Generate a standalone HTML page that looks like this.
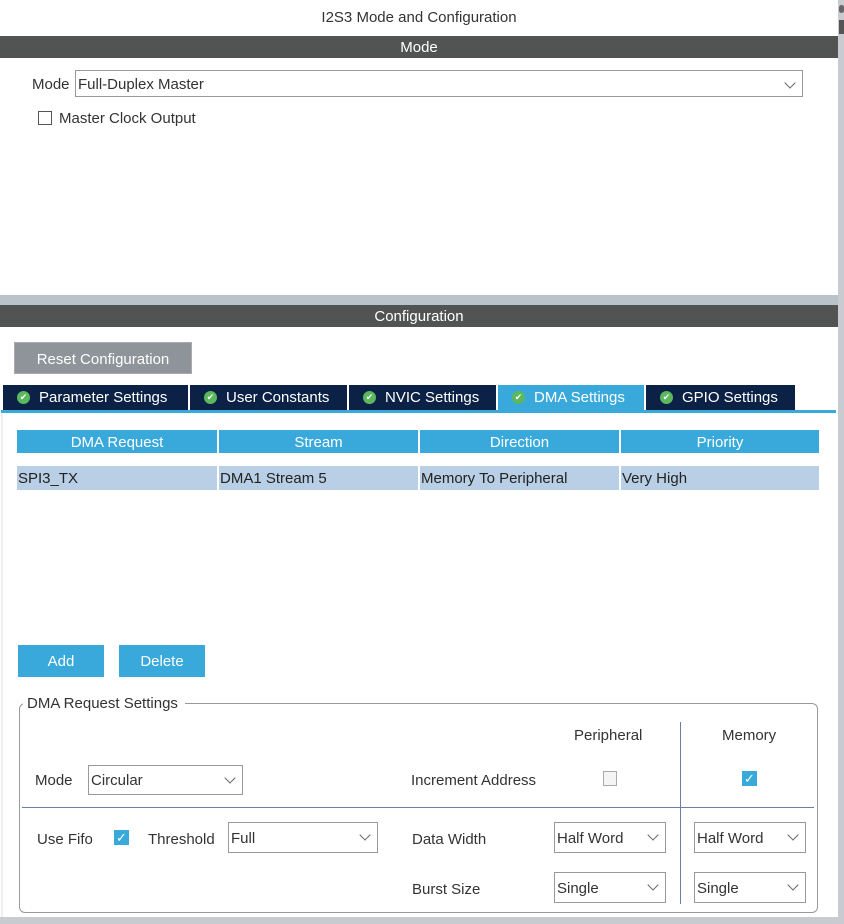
<!DOCTYPE html>
<html><head><style>
*{box-sizing:border-box;margin:0;padding:0}
body{width:844px;height:924px;background:#fff;font-family:"Liberation Sans",sans-serif;font-size:15px;color:#333;position:relative;overflow:hidden}
.a{position:absolute}
.bar{background:#525453;color:#fff;text-align:center;height:22px;line-height:24px;font-size:15px}
.sel{position:absolute;border:1px solid #999;background:#fff;padding-left:2px;line-height:26px}
.sel:after{content:"";position:absolute;right:8px;top:8px;width:7px;height:7px;border-right:1px solid #666;border-bottom:1px solid #666;transform:rotate(45deg)}
.tab{position:absolute;top:385px;height:25px;background:#0b2145;color:#fff;line-height:26px;padding-left:36px}
.tab:before{content:"✔";position:absolute;left:14px;top:6px;width:13px;height:13px;border-radius:50%;background:#5cb85c;color:#fff;font-size:9px;line-height:13px;text-align:center}
.th{position:absolute;top:430px;height:23px;background:#39a9dc;color:#fff;text-align:center;line-height:25px}
.td{position:absolute;top:466px;height:24px;background:#b8cfe6;line-height:26px;padding-left:1px;color:#222}
.btn{position:absolute;background:#39a9dc;color:#fff;text-align:center;line-height:34px;height:32px}
.cb{position:absolute;width:15px;height:15px;background:#39a9dc;color:#fff;font-size:13px;line-height:15px;text-align:center}
.t{position:absolute;top:0}
</style></head><body>
<div class="a" style="left:838px;top:0;width:6px;height:924px;background:#c8ccd1"></div>
<div class="a" style="left:839px;top:5px;width:5px;height:8px;background:#666;border-radius:3px"></div>
<div class="a" style="left:839px;top:20px;width:5px;height:14px;background:#555"></div>
<div class="a" style="left:0;top:9px;width:838px;text-align:center;font-size:15px">I2S3 Mode and Configuration</div>
<div class="a bar" style="left:0;top:36px;width:838px">Mode</div>
<div class="a" style="left:32px;top:76px">Mode</div>
<div class="sel" style="left:75px;top:70px;width:728px;height:27px;line-height:27px">Full-Duplex Master</div>
<div class="a" style="left:38px;top:111px;width:14px;height:14px;border:1px solid #555"></div>
<div class="a" style="left:59px;top:110px">Master Clock Output</div>
<div class="a" style="left:0;top:295px;width:838px;height:10px;background:#b9c3c9"></div>
<div class="a bar" style="left:0;top:305px;width:838px">Configuration</div>
<div class="a" style="left:14px;top:342px;width:178px;height:32px;background:#8e9499;color:#fff;line-height:34px;text-align:center;border:1px solid #aaa">Reset Configuration</div>
<div class="tab" style="left:3px;width:185px">Parameter Settings</div>
<div class="tab" style="left:190px;width:157px">User Constants</div>
<div class="tab" style="left:349px;width:147px">NVIC Settings</div>
<div class="tab" style="left:498px;width:146px;background:#39a9dc">DMA Settings</div>
<div class="tab" style="left:646px;width:149px">GPIO Settings</div>
<div class="a" style="left:1px;top:410px;width:835px;height:3px;background:#39a9dc"></div>
<div class="a" style="left:1px;top:413px;width:2px;height:505px;background:#eee"></div>
<div class="th" style="left:17px;width:200px">DMA Request</div>
<div class="th" style="left:219px;width:199px">Stream</div>
<div class="th" style="left:420px;width:199px">Direction</div>
<div class="th" style="left:621px;width:198px">Priority</div>
<div class="td" style="left:17px;width:200px">SPI3_TX</div>
<div class="td" style="left:219px;width:199px">DMA1 Stream 5</div>
<div class="td" style="left:420px;width:199px">Memory To Peripheral</div>
<div class="td" style="left:621px;width:198px">Very High</div>
<div class="btn" style="left:18px;top:645px;width:86px">Add</div>
<div class="btn" style="left:119px;top:645px;width:86px">Delete</div>
<div class="a" style="left:19px;top:703px;width:799px;height:210px;border:1px solid #999;border-radius:6px"></div>
<div class="a" style="left:23px;top:695px;background:#fff;padding:0 7px 0 4px">DMA Request Settings</div>
<div class="a" style="left:574px;top:727px">Peripheral</div>
<div class="a" style="left:722px;top:727px">Memory</div>
<div class="a" style="left:680px;top:722px;width:1px;height:182px;background:#6a7fa8"></div>
<div class="a" style="left:22px;top:807px;width:792px;height:1px;background:#6a7fa8"></div>
<div class="a" style="left:35px;top:772px">Mode</div>
<div class="sel" style="left:88px;top:765px;width:155px;height:30px;line-height:29px">Circular</div>
<div class="a" style="left:411px;top:772px">Increment Address</div>
<div class="a" style="left:603px;top:771px;width:14px;height:15px;border:1px solid #aaa;background:#f4f4f4"></div>
<div class="cb" style="left:742px;top:771px">✓</div>
<div class="a" style="left:37px;top:831px">Use Fifo</div>
<div class="cb" style="left:114px;top:830px">✓</div>
<div class="a" style="left:148px;top:831px">Threshold</div>
<div class="sel" style="left:228px;top:822px;width:150px;height:31px;line-height:31px">Full</div>
<div class="a" style="left:412px;top:831px">Data Width</div>
<div class="sel" style="left:554px;top:822px;width:112px;height:31px;line-height:31px">Half Word</div>
<div class="sel" style="left:694px;top:822px;width:112px;height:31px;line-height:31px">Half Word</div>
<div class="a" style="left:412px;top:881px">Burst Size</div>
<div class="sel" style="left:554px;top:872px;width:112px;height:31px;line-height:31px">Single</div>
<div class="sel" style="left:694px;top:872px;width:112px;height:31px;line-height:31px">Single</div>
<div class="a" style="left:0;top:917px;width:844px;height:7px;background:#c8ccd1"></div>
</body></html>
